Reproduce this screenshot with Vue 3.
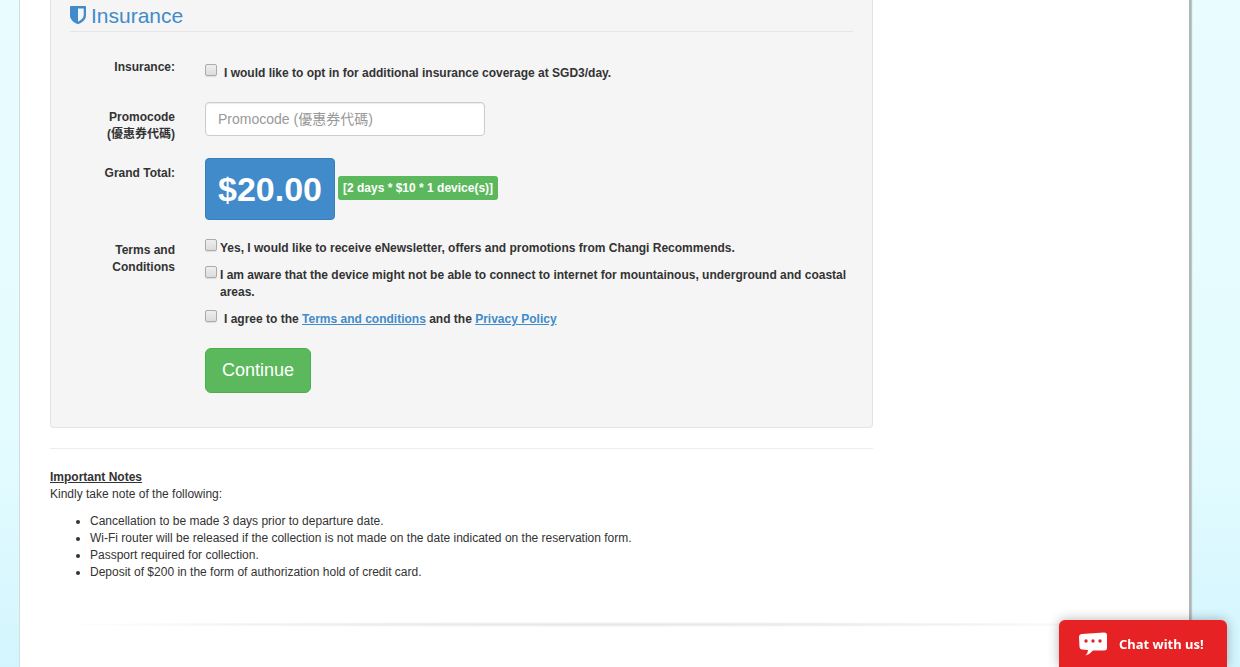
<script setup>
import { ref } from 'vue'

const insurance = ref(false)
const promocode = ref('')
const newsletter = ref(false)
const aware = ref(false)
const agree = ref(false)

const notes = [
  'Cancellation to be made 3 days prior to departure date.',
  'Wi-Fi router will be released if the collection is not made on the date indicated on the reservation form.',
  'Passport required for collection.',
  'Deposit of $200 in the form of authorization hold of credit card.',
]
</script>

<template>
  <div class="page">
    <main class="sheet">
      <div class="main-column">
        <form class="well" @submit.prevent>
          <h3 class="section-title">
            <svg class="shield" viewBox="0 0 16 20" aria-hidden="true">
              <path
                fill-rule="evenodd"
                d="M1 0H15Q16 0 16 1V9.500C16 13.500 12.500 16.300 8 18.300C3.500 16.300 0 13.500 0 9.500V1Q0 0 1 0ZM8 2.500V15.800C11.500 13.800 13.700 11.800 13.700 9.300V2.500Z"
              />
            </svg>
            <span>Insurance</span>
          </h3>

          <div class="row">
            <label class="row-label" for="insurance">Insurance:</label>
            <div class="choice choice-spaced choice-first">
              <input id="insurance" v-model="insurance" type="checkbox" />
              <label for="insurance">I would like to opt in for additional insurance coverage at SGD3/day.</label>
            </div>
          </div>

          <div class="row row-promo">
            <label class="row-label" for="promocode">Promocode<br />(優惠券代碼)</label>
            <input
              id="promocode"
              v-model="promocode"
              class="text-box"
              type="text"
              placeholder="Promocode (優惠券代碼)"
            />
          </div>

          <div class="row row-total">
            <span class="row-label">Grand Total:</span>
            <div class="total">
              <button class="amount" type="button">$20.00</button>
              <span class="badge">[2 days * $10 * 1 device(s)]</span>
            </div>
          </div>

          <div class="row row-terms">
            <span class="row-label">Terms and Conditions</span>
            <div class="choices">
              <div class="choice">
                <input id="newsletter" v-model="newsletter" type="checkbox" />
                <label for="newsletter">Yes, I would like to receive eNewsletter, offers and promotions from Changi Recommends.</label>
              </div>
              <div class="choice">
                <input id="aware" v-model="aware" type="checkbox" />
                <label for="aware">I am aware that the device might not be able to connect to internet for mountainous, underground and coastal areas.</label>
              </div>
              <div class="choice choice-spaced">
                <input id="agree" v-model="agree" type="checkbox" />
                <label for="agree">I agree to the <a href="#terms">Terms and conditions</a> and the <a href="#privacy">Privacy Policy</a></label>
              </div>
            </div>
          </div>

          <div class="row row-submit">
            <button class="continue" type="submit">Continue</button>
          </div>
        </form>

        <hr class="divider" />

        <section class="notes">
          <strong>Important Notes</strong>
          <p>Kindly take note of the following:</p>
          <ul>
            <li v-for="note in notes" :key="note">{{ note }}</li>
          </ul>
        </section>
      </div>
      <div class="fade-rule"></div>
    </main>

    <button class="chat" type="button">
      <svg class="bubble" viewBox="0 0 28 24" aria-hidden="true">
        <path
          class="bubble-shape"
          d="M3 2L25 0.500Q28 0.500 28 3V16Q28 18.500 25 18.500L14 18.500Q11 22 6.500 23.500Q9 21 9 18L3 17.500Q0.500 17 0.500 15L0 5Q0 2.300 3 2Z"
        />
        <circle cx="7" cy="9" r="1.700" />
        <circle cx="14" cy="9" r="1.700" />
        <circle cx="21" cy="9" r="1.700" />
      </svg>
      <span>Chat with us!</span>
    </button>
  </div>
</template>

<style>
body {
  margin: 0;
}
</style>

<style scoped>
* {
  box-sizing: border-box;
}

.page {
  display: flex;
  min-height: 100vh;
  padding: 0 49px 0 19px;
  background: linear-gradient(#e9fcff 0%, #e4fcff 65%, #d4f5fe 100%);
  color: #333;
  font-family: "Liberation Sans", Arial, "Noto Sans CJK TC", sans-serif;
  font-size: 12px;
  line-height: 17px;
}

.sheet {
  flex: 1;
  padding: 0 30px;
  border-left: 1px solid #d3dcde;
  border-right: 2px solid #b0b5b6;
  background: #fff;
  box-shadow: 1px 0 1px #bcc8ca;
}

.main-column {
  width: calc(75% - 9px);
}

.well {
  padding: 4px 19px 34px;
  border: 1px solid #e3e3e3;
  border-top: 0;
  border-radius: 0 0 4px 4px;
  background: #f5f5f5;
}

.section-title {
  display: flex;
  align-items: center;
  gap: 5px;
  margin: 0 0 26px;
  padding-bottom: 3px;
  border-bottom: 1px solid #e5e5e5;
  color: #428bca;
  font-size: 21px;
  font-weight: 400;
  line-height: 24px;
}

.shield {
  width: 16px;
  height: 20px;
  fill: #428bca;
}

.row {
  display: grid;
  grid-template-columns: 105px 1fr;
  column-gap: 30px;
  align-items: start;
}

.row-label {
  padding-top: 1px;
  font-weight: 700;
  text-align: right;
}

.row-promo {
  margin-top: 20px;
}

.row-promo .row-label,
.row-total .row-label {
  padding-top: 7px;
}

.row-total {
  margin-top: 15px;
}

.row-terms {
  margin-top: 19px;
}

.row-terms .row-label {
  padding-top: 3px;
}

.row-submit {
  margin-top: 20px;
}

.choice {
  display: flex;
  align-items: flex-start;
  gap: 3px;
  font-weight: 700;
}

.choice label {
  padding-top: 1px;
}

.choice-spaced {
  gap: 7px;
}

.choice-first {
  padding-top: 6px;
}

.choice input {
  flex: none;
  appearance: none;
  width: 12px;
  height: 12px;
  margin: 0;
  border: 1px solid #ababab;
  border-radius: 2px;
  background: linear-gradient(#eee, #dcdcdc);
  box-shadow: 0 1px 1px #ddd;
}

.choice input:checked {
  background: #428bca;
}

.choices {
  display: flex;
  flex-direction: column;
  gap: 9px;
}

a {
  color: #428bca;
}

.text-box {
  width: 280px;
  height: 34px;
  padding: 6px 12px;
  border: 1px solid #ccc;
  border-radius: 4px;
  background: #fff;
  box-shadow: inset 0 1px 1px rgba(0, 0, 0, 0.08);
  color: #555;
  font: inherit;
  font-size: 14px;
}

.text-box::placeholder {
  color: #999;
}

.total {
  display: flex;
  align-items: center;
  gap: 3px;
}

.amount {
  padding: 6px 12px;
  border: 1px solid #357ebd;
  border-radius: 4px;
  background: #428bca;
  color: #fff;
  font: inherit;
  font-size: 34px;
  font-weight: 700;
  line-height: 48px;
}

.badge {
  margin-bottom: 2px;
  padding: 4px 5px 3px;
  border-radius: 3px;
  background: #5cb85c;
  color: #fff;
  font-weight: 700;
}

.continue {
  grid-column: 2;
  justify-self: start;
  padding: 10px 16px;
  border: 1px solid #4cae4c;
  border-radius: 6px;
  background: #5cb85c;
  color: #fff;
  font: inherit;
  font-size: 18px;
  line-height: 23px;
}

.divider {
  margin: 20px 0;
  border: 0;
  border-top: 1px solid #eee;
}

.notes strong {
  text-decoration: underline;
}

.notes p {
  margin: 0 0 10px;
}

.notes ul {
  margin: 0;
  padding-left: 40px;
}

.fade-rule {
  height: 5px;
  margin-top: 41px;
  background: radial-gradient(closest-side, #e6e6e6, #f1f1f1 60%, #fff);
}

.chat {
  position: fixed;
  right: 13px;
  bottom: 0;
  display: flex;
  align-items: center;
  gap: 12px;
  min-width: 168px;
  height: 47px;
  padding: 0 20px;
  border: 0;
  border-radius: 6px 6px 0 0;
  background: #e62224;
  box-shadow: 0 0 12px rgba(0, 0, 0, 0.3);
  color: #fff;
  font-family: "Noto Sans", "Open Sans", sans-serif;
  font-size: 13px;
  font-weight: 700;
}

.bubble {
  width: 28px;
  height: 24px;
  fill: #e62224;
}

.bubble-shape {
  fill: #fff;
}
</style>
